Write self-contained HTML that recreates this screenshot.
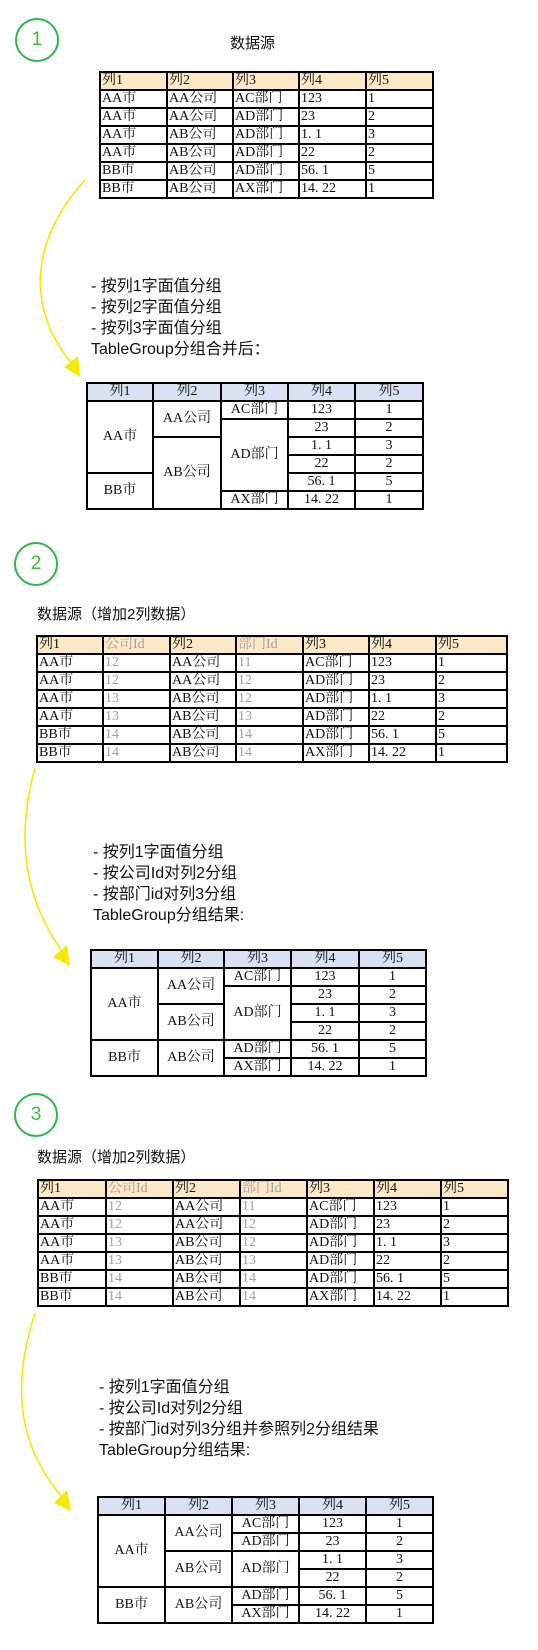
<!DOCTYPE html>
<html><head><meta charset="utf-8">
<style>
html,body{margin:0;padding:0;background:#fff;}
body{width:538px;height:1650px;position:relative;overflow:hidden;font-family:"Liberation Sans","Noto Sans CJK SC",sans-serif;}
.circ{position:absolute;width:40px;height:40px;border:2px solid #2db84f;border-radius:50%;color:#3cbf3c;font-size:19px;line-height:40px;text-align:center;font-family:"Liberation Sans",sans-serif;}
.t{position:absolute;font-size:15px;color:#111;white-space:nowrap;}
.lines{position:absolute;font-size:16px;line-height:21px;color:#111;white-space:nowrap;}
table{position:absolute;border-collapse:collapse;table-layout:fixed;font-family:"Liberation Serif","Noto Serif CJK SC",serif;font-size:14px;color:#111;}
td{border:2px solid #000;padding:0 0 0 1px;height:16px;line-height:16px;overflow:hidden;white-space:nowrap;box-sizing:content-box;}
.src tr:first-child td{background:#fde9c6;}
.g{color:#a0a0a0;}
.res td{text-align:center;padding:0;}
.res tr:first-child td{background:#d9e1f2;}
</style></head><body>

<svg width="538" height="1650" style="position:absolute;left:0;top:0" xmlns="http://www.w3.org/2000/svg">
<g fill="none" stroke="#f7ea00" stroke-width="1.6">
<path d="M85,180 C30,240 25,310 74,366"/>
<path d="M35,768 C15,840 25,900 64,954"/>
<path d="M35,1313 C10,1390 20,1450 64,1499"/>
</g>
<g fill="#f7ea00">
<polygon points="80,377 64,367 78,356"/>
<polygon points="70,966 53,957 67,945"/>
<polygon points="71,1511 54,1503 67,1490"/>
</g>
</svg>

<div class="circ" style="left:15px;top:18px">1</div>
<div class="t" style="left:230px;top:32px">数据源</div>
<table class="src" style="left:99px;top:71px;width:333px">
<colgroup><col style="width:67px"><col style="width:66px"><col style="width:66px"><col style="width:67px"><col style="width:67px"></colgroup>
<tr><td>列1</td><td>列2</td><td>列3</td><td>列4</td><td>列5</td></tr>
<tr><td>AA市</td><td>AA公司</td><td>AC部门</td><td>123</td><td>1</td></tr>
<tr><td>AA市</td><td>AA公司</td><td>AD部门</td><td>23</td><td>2</td></tr>
<tr><td>AA市</td><td>AB公司</td><td>AD部门</td><td>1. 1</td><td>3</td></tr>
<tr><td>AA市</td><td>AB公司</td><td>AD部门</td><td>22</td><td>2</td></tr>
<tr><td>BB市</td><td>AB公司</td><td>AD部门</td><td>56. 1</td><td>5</td></tr>
<tr><td>BB市</td><td>AB公司</td><td>AX部门</td><td>14. 22</td><td>1</td></tr>
</table>

<div class="lines" style="left:91px;top:276px">- 按列1字面值分组<br>- 按列2字面值分组<br>- 按列3字面值分组<br>TableGroup分组合并后：</div>

<table class="res" style="left:86px;top:382px;width:336px">
<colgroup><col style="width:66px"><col style="width:68px"><col style="width:67px"><col style="width:67px"><col style="width:68px"></colgroup>
<tr><td>列1</td><td>列2</td><td>列3</td><td>列4</td><td>列5</td></tr>
<tr><td rowspan="4">AA市</td><td rowspan="2">AA公司</td><td>AC部门</td><td>123</td><td>1</td></tr>
<tr><td rowspan="4">AD部门</td><td>23</td><td>2</td></tr>
<tr><td rowspan="4">AB公司</td><td>1. 1</td><td>3</td></tr>
<tr><td>22</td><td>2</td></tr>
<tr><td rowspan="2">BB市</td><td>56. 1</td><td>5</td></tr>
<tr><td>AX部门</td><td>14. 22</td><td>1</td></tr>
</table>

<div class="circ" style="left:14px;top:542px">2</div>
<div class="t" style="left:37px;top:603px">数据源（增加2列数据）</div>
<table class="src" style="left:36px;top:635px;width:470px">
<colgroup><col style="width:66px"><col style="width:67px"><col style="width:66px"><col style="width:67px"><col style="width:66px"><col style="width:67px"><col style="width:71px"></colgroup>
<tr><td>列1</td><td class="g">公司Id</td><td>列2</td><td class="g">部门Id</td><td>列3</td><td>列4</td><td>列5</td></tr>
<tr><td>AA市</td><td class="g">12</td><td>AA公司</td><td class="g">11</td><td>AC部门</td><td>123</td><td>1</td></tr>
<tr><td>AA市</td><td class="g">12</td><td>AA公司</td><td class="g">12</td><td>AD部门</td><td>23</td><td>2</td></tr>
<tr><td>AA市</td><td class="g">13</td><td>AB公司</td><td class="g">12</td><td>AD部门</td><td>1. 1</td><td>3</td></tr>
<tr><td>AA市</td><td class="g">13</td><td>AB公司</td><td class="g">13</td><td>AD部门</td><td>22</td><td>2</td></tr>
<tr><td>BB市</td><td class="g">14</td><td>AB公司</td><td class="g">14</td><td>AD部门</td><td>56. 1</td><td>5</td></tr>
<tr><td>BB市</td><td class="g">14</td><td>AB公司</td><td class="g">14</td><td>AX部门</td><td>14. 22</td><td>1</td></tr>
</table>

<div class="lines" style="left:93px;top:842px">- 按列1字面值分组<br>- 按公司Id对列2分组<br>- 按部门id对列3分组<br>TableGroup分组结果:</div>

<table class="res" style="left:90px;top:949px;width:335px">
<colgroup><col style="width:67px"><col style="width:66px"><col style="width:67px"><col style="width:68px"><col style="width:67px"></colgroup>
<tr><td>列1</td><td>列2</td><td>列3</td><td>列4</td><td>列5</td></tr>
<tr><td rowspan="4">AA市</td><td rowspan="2">AA公司</td><td>AC部门</td><td>123</td><td>1</td></tr>
<tr><td rowspan="3">AD部门</td><td>23</td><td>2</td></tr>
<tr><td rowspan="2">AB公司</td><td>1. 1</td><td>3</td></tr>
<tr><td>22</td><td>2</td></tr>
<tr><td rowspan="2">BB市</td><td rowspan="2">AB公司</td><td>AD部门</td><td>56. 1</td><td>5</td></tr>
<tr><td>AX部门</td><td>14. 22</td><td>1</td></tr>
</table>

<div class="circ" style="left:14px;top:1093px">3</div>
<div class="t" style="left:37px;top:1146px">数据源（增加2列数据）</div>
<table class="src" style="left:37px;top:1179px;width:470px">
<colgroup><col style="width:68px"><col style="width:67px"><col style="width:67px"><col style="width:67px"><col style="width:67px"><col style="width:67px"><col style="width:67px"></colgroup>
<tr><td>列1</td><td class="g">公司Id</td><td>列2</td><td class="g">部门Id</td><td>列3</td><td>列4</td><td>列5</td></tr>
<tr><td>AA市</td><td class="g">12</td><td>AA公司</td><td class="g">11</td><td>AC部门</td><td>123</td><td>1</td></tr>
<tr><td>AA市</td><td class="g">12</td><td>AA公司</td><td class="g">12</td><td>AD部门</td><td>23</td><td>2</td></tr>
<tr><td>AA市</td><td class="g">13</td><td>AB公司</td><td class="g">12</td><td>AD部门</td><td>1. 1</td><td>3</td></tr>
<tr><td>AA市</td><td class="g">13</td><td>AB公司</td><td class="g">13</td><td>AD部门</td><td>22</td><td>2</td></tr>
<tr><td>BB市</td><td class="g">14</td><td>AB公司</td><td class="g">14</td><td>AD部门</td><td>56. 1</td><td>5</td></tr>
<tr><td>BB市</td><td class="g">14</td><td>AB公司</td><td class="g">14</td><td>AX部门</td><td>14. 22</td><td>1</td></tr>
</table>

<div class="lines" style="left:99px;top:1377px">- 按列1字面值分组<br>- 按公司Id对列2分组<br>- 按部门id对列3分组并参照列2分组结果<br>TableGroup分组结果:</div>

<table class="res" style="left:97px;top:1496px;width:335px">
<colgroup><col style="width:67px"><col style="width:67px"><col style="width:67px"><col style="width:67px"><col style="width:67px"></colgroup>
<tr><td>列1</td><td>列2</td><td>列3</td><td>列4</td><td>列5</td></tr>
<tr><td rowspan="4">AA市</td><td rowspan="2">AA公司</td><td>AC部门</td><td>123</td><td>1</td></tr>
<tr><td>AD部门</td><td>23</td><td>2</td></tr>
<tr><td rowspan="2">AB公司</td><td rowspan="2">AD部门</td><td>1. 1</td><td>3</td></tr>
<tr><td>22</td><td>2</td></tr>
<tr><td rowspan="2">BB市</td><td rowspan="2">AB公司</td><td>AD部门</td><td>56. 1</td><td>5</td></tr>
<tr><td>AX部门</td><td>14. 22</td><td>1</td></tr>
</table>

</body></html>
